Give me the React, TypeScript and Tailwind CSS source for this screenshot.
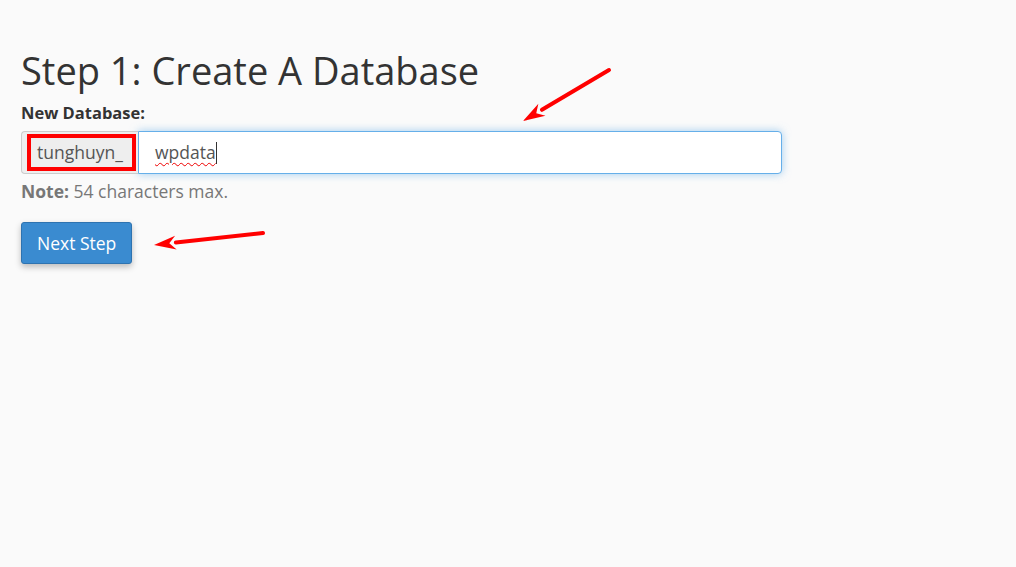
const Arrow = ({ className, x1, y1, x2, y2 }: { className: string; x1: number; y1: number; x2: number; y2: number }) => {
  const ang = Math.atan2(y2 - y1, x2 - x1)
  const len = 22
  const w = 7
  const bx = x2 - len * Math.cos(ang)
  const by = y2 - len * Math.sin(ang)
  const px = -Math.sin(ang) * w
  const py = Math.cos(ang) * w
  return (
    <svg className={className} width="1016" height="567" viewBox="0 0 1016 567">
      <line x1={x1} y1={y1} x2={bx} y2={by} stroke="#f00" strokeWidth="4" strokeLinecap="round" />
      <polygon points={`${x2},${y2} ${bx + px},${by + py} ${bx + len * 0.3 * Math.cos(ang)},${by + len * 0.3 * Math.sin(ang)} ${bx - px},${by - py}`} fill="#f00" />
    </svg>
  )
}

export default function App() {
  return (
    <div className="relative w-[1016px] h-[567px] bg-[#fafafa] text-[#333] font-['Open_Sans',sans-serif] pl-[21px] pt-[48px] overflow-hidden">
      <h1 className="text-[38px] leading-[45px] text-[#333]">Step 1: Create A Database</h1>
      <label className="block mt-[9px] text-[16.5px] font-bold leading-[21px]">New Database:</label>
      <div className="flex mt-[8px] w-[761px] h-[43px]">
        <div className="relative flex items-center justify-center w-[117px] bg-[#eeeeee] border border-[#cccccc] border-r-0 rounded-l-[4px] text-[17.5px] text-[#555]">
          <div className="absolute left-[5px] top-[2px] right-[2px] bottom-[2px] border-[4px] border-[#f00]" />
          <span className="relative">tunghuyn_</span>
        </div>
        <div className="flex-1 flex items-center bg-white border border-[#66afe9] rounded-r-[4px] shadow-[0_0_8px_rgba(102,175,233,0.6)] pl-[16px] text-[17.5px] text-[#555]">
          <span className="underline decoration-wavy decoration-[#e00] decoration-1 underline-offset-[3px]">wpdata</span>
          <span className="w-px h-[22px] bg-[#333]" />
        </div>
      </div>
      <p className="mt-[4px] text-[17.5px] leading-[26px] text-[#777]">
        <b>Note:</b> 54 characters max.
      </p>
      <button className="mt-[18px] h-[42px] px-[15px] bg-[#3a8bd0] border border-[#2e73b0] rounded-[3px] text-white text-[17.5px] shadow-[0_3px_6px_rgba(0,0,0,0.25)]">
        Next Step
      </button>
      <Arrow className="absolute left-0 top-0 pointer-events-none" x1={609} y1={70} x2={523} y2={121} />
      <Arrow className="absolute left-0 top-0 pointer-events-none" x1={263} y1={233} x2={154} y2={245} />
    </div>
  )
}
